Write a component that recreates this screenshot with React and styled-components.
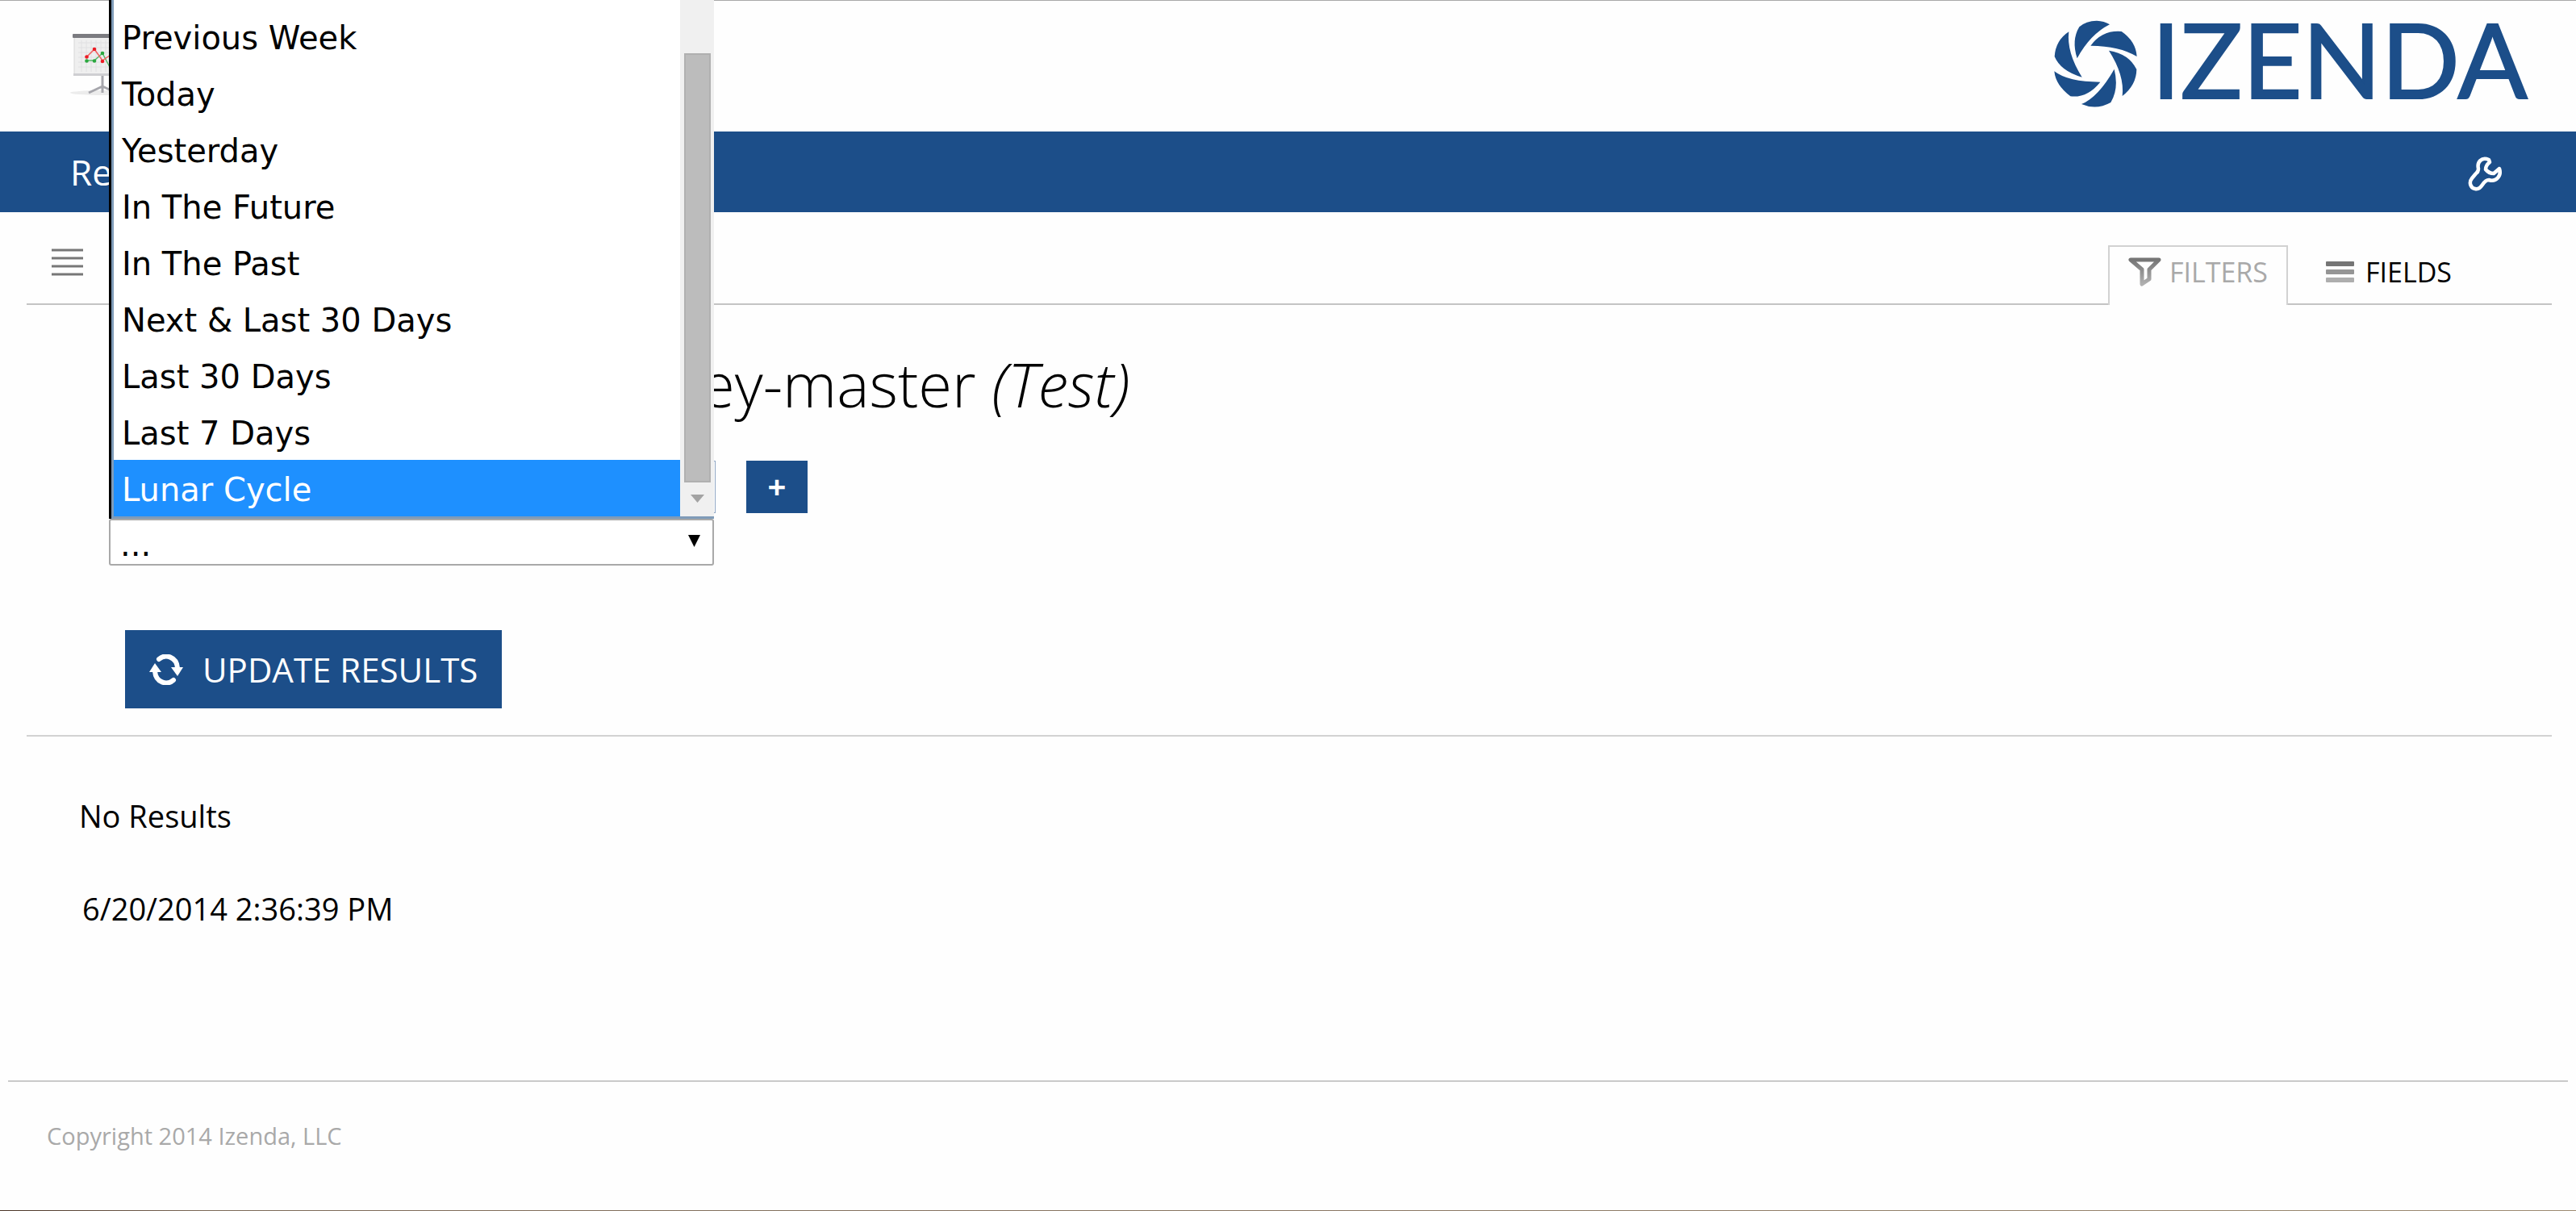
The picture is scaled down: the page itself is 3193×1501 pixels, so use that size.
import React from "react";
import styled, { createGlobalStyle } from "styled-components";

const BLUE = "#1c4e89";
const RULE = "#c4c4c4";

const GlobalStyle = createGlobalStyle`
  *, *::before, *::after { box-sizing: border-box; }
  body {
    margin: 0;
    background: #fefefe;
    color: #000;
    font-family: "Open Sans", "Noto Sans", sans-serif;
  }
  h1, p, ul { margin: 0; padding: 0; }
  button, select { font: inherit; }
`;

const Page = styled.div`
  min-height: 100vh;
  display: flex;
  flex-direction: column;
  border-top: 1px solid #a9a9a9;
`;

const Header = styled.header`
  display: flex;
  justify-content: space-between;
  align-items: center;
  height: 162px;
  padding: 0 60px 6px 84px;
`;

const Brand = styled.a`
  display: flex;
  align-items: center;
  gap: 17px;
  color: ${BLUE};
  text-decoration: none;
`;

const Wordmark = styled.span`
  padding-bottom: 12px;
  font-family: Lato, sans-serif;
  font-size: 128px;
  line-height: 140px;
  -webkit-text-stroke: 2px ${BLUE};
`;

const NavBar = styled.nav`
  display: flex;
  justify-content: space-between;
  align-items: center;
  height: 100px;
  padding: 0 90px 0 87px;
  background: ${BLUE};
`;

const NavLink = styled.a`
  color: #fff;
  font-size: 44px;
  line-height: 60px;
  text-decoration: none;
`;

const IconButton = styled.button`
  display: flex;
  padding: 0;
  border: 0;
  background: none;
`;

const Toolbar = styled.div`
  display: flex;
  justify-content: space-between;
  align-items: flex-end;
  height: 115px;
  margin: 0 30px 0 33px;
  padding: 0 124px 0 31px;
  border-bottom: 2px solid ${RULE};
`;

const MenuButton = styled(IconButton)`
  padding-bottom: 34px;
`;

const Tabs = styled.div`
  display: flex;
  margin-bottom: -2px;
`;

const Tab = styled.button`
  display: flex;
  align-items: center;
  gap: 10px;
  height: 74px;
  padding: 0 23px 10px;
  border: 2px solid ${(p) => (p.$active ? "#d2d2d2" : "transparent")};
  border-bottom: 0;
  background: ${(p) => (p.$active ? "#fefefe" : "none")};
  color: ${(p) => (p.$active ? "#a9a9a9" : "#000")};
  font-size: 34px;
  line-height: 48px;
  & + & {
    padding: 0 0 10px 45px;
    border-right: 0;
    gap: 14px;
  }
`;

const Filters = styled.section`
  margin: 0 30px 0 33px;
  padding: 48px 0 33px 102px;
  border-bottom: 2px solid #d2d2d2;
`;

const Title = styled.h1`
  margin-bottom: 45px;
  padding-left: 734px;
  font-size: 76px;
  font-weight: 300;
  line-height: 100px;
`;

const FilterRow = styled.div`
  display: flex;
  gap: 38px;
  margin-bottom: 7px;
`;

const FieldSelect = styled.select`
  appearance: none;
  width: 752px;
  height: 65px;
  border: 1px solid #8fa6c3;
  background: #fff;
`;

const AddButton = styled.button`
  width: 76px;
  height: 65px;
  padding: 0 0 2px;
  border: 0;
  background: ${BLUE};
  color: #fff;
  font-size: 40px;
  font-weight: 700;
  line-height: 60px;
`;

const Combo = styled.div`
  position: relative;
  width: 750px;
`;

const PeriodSelect = styled.select`
  display: block;
  appearance: none;
  width: 100%;
  height: 58px;
  padding: 6px 48px 0 12px;
  border: 2px solid #a9a9a9;
  border-radius: 3px;
  background: #fff;
  color: #000;
  font-family: "DejaVu Sans", sans-serif;
  font-size: 40px;
  line-height: 48px;
`;

const ComboArrow = styled.svg`
  position: absolute;
  top: 20px;
  right: 17px;
  pointer-events: none;
`;

const Popup = styled.div`
  position: absolute;
  left: 3px;
  right: 0;
  bottom: 100%;
  z-index: 1;
  display: flex;
  border: solid #7f9bb8;
  border-width: 0 0 3px 3px;
  background: #fff;
  box-shadow: -3px 0 0 #000;
`;

const OptionList = styled.ul`
  flex: 1;
  padding-top: 10px;
  list-style: none;
`;

const Option = styled.li`
  height: 70px;
  padding-left: 10px;
  background: ${(p) => (p.$selected ? "#1e90ff" : "#fff")};
  color: ${(p) => (p.$selected ? "#fff" : "#000")};
  font-family: "DejaVu Sans", sans-serif;
  font-size: 40px;
  line-height: 74px;
`;

const ScrollTrack = styled.div`
  display: flex;
  flex-direction: column;
  align-items: center;
  gap: 15px;
  width: 42px;
  padding-top: 66px;
  padding-bottom: 17px;
  background: #f0f0f0;
`;

const ScrollThumb = styled.div`
  flex: 1;
  width: 33px;
  border: 2px solid #b0b0b0;
  background: #bcbcbc;
`;

const UpdateButton = styled.button`
  display: flex;
  align-items: center;
  gap: 24px;
  height: 97px;
  margin: 80px 0 0 20px;
  padding: 0 30px;
  border: 0;
  background: ${BLUE};
  color: #fff;
  font-size: 42px;
  line-height: 56px;
`;

const Results = styled.main`
  display: flex;
  flex-direction: column;
  gap: 65px;
  padding: 73px 98px 188px;
  font-size: 38px;
  line-height: 50px;
`;

const Timestamp = styled.p`
  padding-left: 4px;
`;

const Footer = styled.footer`
  flex: 1;
  margin: 0 10px;
  padding: 47px 48px;
  border-top: 2px solid #cacaca;
  color: #a9a9a9;
  font-size: 29px;
  line-height: 40px;
`;

const BottomEdge = styled.div`
  height: 1px;
  background: linear-gradient(90deg, #4a3426, #7d6a58 8%, #8a7763 50%, #9d8b72);
`;

const PERIODS = [
  "Previous Week",
  "Today",
  "Yesterday",
  "In The Future",
  "In The Past",
  "Next & Last 30 Days",
  "Last 30 Days",
  "Last 7 Days",
  "Lunar Cycle",
];

function BoardIcon() {
  return (
    <svg width="84" height="84" viewBox="84 36 84 84" aria-hidden="true">
      <ellipse cx="127" cy="114" rx="40" ry="3" fill="#ececec" />
      <rect x="92" y="45" width="70" height="47" fill="#efefef" stroke="#d8d8d8" />
      <path
        d="M97 52H157M97 58H157M97 64H157M97 70H157M97 76H157M97 82H157M101 49V88M107 49V88M113 49V88M119 49V88M125 49V88M131 49V88M137 49V88"
        stroke="#e0e0e2"
      />
      <rect x="90" y="41" width="74" height="5" rx="1" fill="#7b7b80" />
      <rect x="91" y="90" width="72" height="3" fill="#cfcfd2" />
      <path d="M127 93V114M127 106L110 114M127 106L144 114" stroke="#a6a6ac" strokeWidth="3" fill="none" />
      <path d="M107 74H117L127 65L137 84" stroke="#59b96a" strokeWidth="1.5" fill="none" />
      <path d="M107 70L117 60L127 74L137 67" stroke="#f06060" strokeWidth="1.5" fill="none" />
      <g fill="#2aa83f">
        <circle cx="107.500" cy="74.500" r="2.300" />
        <circle cx="117" cy="74.500" r="2.300" />
        <circle cx="127" cy="65" r="2.300" />
      </g>
      <g fill="#ec1c24">
        <circle cx="107.500" cy="69.500" r="2.300" />
        <circle cx="117" cy="60" r="2.300" />
        <circle cx="127" cy="75" r="2.300" />
      </g>
    </svg>
  );
}

function SwirlMark() {
  return (
    <svg width="104" height="108" viewBox="36 30 312 324" fill={BLUE} aria-hidden="true">
      <path d="M130 55Q155 32 195 32Q222 33 243 46Q170 83 122 172Q100 105 130 55Z" />
      <path d="M172 125Q215 66 287 72Q340 108 344 165Q280 126 172 125Z" />
      <path d="M240 143Q315 155 343 213Q342 272 290 312Q299 235 240 143Z" />
      <path d="M260 212Q278 285 247 336Q193 366 138 342Q200 317 260 212Z" />
      <path d="M208 260Q160 320 97 313Q42 272 37 220Q88 260 208 260Z" />
      <path d="M140 242Q60 219 38 165Q42 105 91 73Q82 150 140 242Z" />
    </svg>
  );
}

function WrenchIcon() {
  return (
    <svg width="44" height="48" viewBox="0 -4 44 48" fill="none" stroke="#fff" strokeWidth="4.500" strokeLinejoin="round" strokeLinecap="round" aria-hidden="true">
      <path d="M26 5C17 1 11 8 13 16Q13 20 10 22L5 28C1 33 3 40 9 41C13 42 16 39 18 36Q22 30 26 30C35 33 42 25 39 16L32 22Q26 22 22 17Q22 12 27 8Z" />
    </svg>
  );
}

function LinesIcon() {
  return (
    <svg width="39" height="34" viewBox="0 0 39 34" aria-hidden="true">
      <path d="M0 2H39M0 12H39M0 22H39M0 32H39" stroke="#777" strokeWidth="3" />
    </svg>
  );
}

function FunnelIcon() {
  return (
    <svg width="41" height="36" viewBox="0 0 41 36" aria-hidden="true">
      <defs>
        <linearGradient id="funnel" x1="0" y1="0" x2="0" y2="1">
          <stop offset="0" stopColor="#757575" />
          <stop offset="1" stopColor="#b0b0b0" />
        </linearGradient>
      </defs>
      <path d="M3 3H38L26 15V27L17 33V15Z" fill="none" stroke="url(#funnel)" strokeWidth="5" strokeLinejoin="round" />
    </svg>
  );
}

function FieldsIcon() {
  return (
    <svg width="35" height="26" viewBox="0 0 35 26" aria-hidden="true">
      <rect width="35" height="6" rx="1" fill="#757575" />
      <rect y="10" width="35" height="6" rx="1" fill="#959595" />
      <rect y="20" width="35" height="6" rx="1" fill="#aeaeae" />
    </svg>
  );
}

function RefreshIcon() {
  return (
    <svg width="42" height="38" viewBox="0 0 42 38" aria-hidden="true">
      <path d="M12 6C20 -1 34 3 35 17" fill="none" stroke="#fff" strokeWidth="6" strokeLinecap="round" />
      <path d="M27 16H42L35 27Z" fill="#fff" />
      <path d="M30 32C22 39 8 35 7 21" fill="none" stroke="#fff" strokeWidth="6" strokeLinecap="round" />
      <path d="M0 22H15L7 11Z" fill="#fff" />
    </svg>
  );
}

export default function App() {
  return (
    <>
      <GlobalStyle />
      <Page>
        <Header>
          <BoardIcon />
          <Brand href="#home">
            <SwirlMark />
            <Wordmark>IZENDA</Wordmark>
          </Brand>
        </Header>
        <NavBar>
          <NavLink href="#reports">Re</NavLink>
          <IconButton type="button" aria-label="Settings">
            <WrenchIcon />
          </IconButton>
        </NavBar>
        <Toolbar>
          <MenuButton type="button" aria-label="Menu">
            <LinesIcon />
          </MenuButton>
          <Tabs>
            <Tab type="button" $active>
              <FunnelIcon />
              FILTERS
            </Tab>
            <Tab type="button">
              <FieldsIcon />
              FIELDS
            </Tab>
          </Tabs>
        </Toolbar>
        <Filters>
          <Title>
            ey-master <em>(Test)</em>
          </Title>
          <FilterRow>
            <FieldSelect aria-label="Filter field" />
            <AddButton type="button" aria-label="Add filter">+</AddButton>
          </FilterRow>
          <Combo>
            <PeriodSelect aria-label="Filter period" defaultValue="">
              <option value="">...</option>
              {PERIODS.map((name) => (
                <option key={name}>{name}</option>
              ))}
            </PeriodSelect>
            <ComboArrow width="15" height="15" viewBox="0 0 15 15" aria-hidden="true">
              <path d="M0 0H15L7.500 15Z" />
            </ComboArrow>
            <Popup>
              <OptionList role="listbox" aria-label="Period">
                {PERIODS.map((name) => {
                  const selected = name === "Lunar Cycle";
                  return (
                    <Option key={name} role="option" aria-selected={selected} $selected={selected}>
                      {name}
                    </Option>
                  );
                })}
              </OptionList>
              <ScrollTrack>
                <ScrollThumb />
                <svg width="17" height="10" viewBox="0 0 17 10" aria-hidden="true">
                  <path d="M0 0H17L8.500 10Z" fill="#a3a3a3" />
                </svg>
              </ScrollTrack>
            </Popup>
          </Combo>
          <UpdateButton type="button">
            <RefreshIcon />
            UPDATE RESULTS
          </UpdateButton>
        </Filters>
        <Results>
          <p>No Results</p>
          <Timestamp>6/20/2014 2:36:39 PM</Timestamp>
        </Results>
        <Footer>Copyright 2014 Izenda, LLC</Footer>
        <BottomEdge />
      </Page>
    </>
  );
}
